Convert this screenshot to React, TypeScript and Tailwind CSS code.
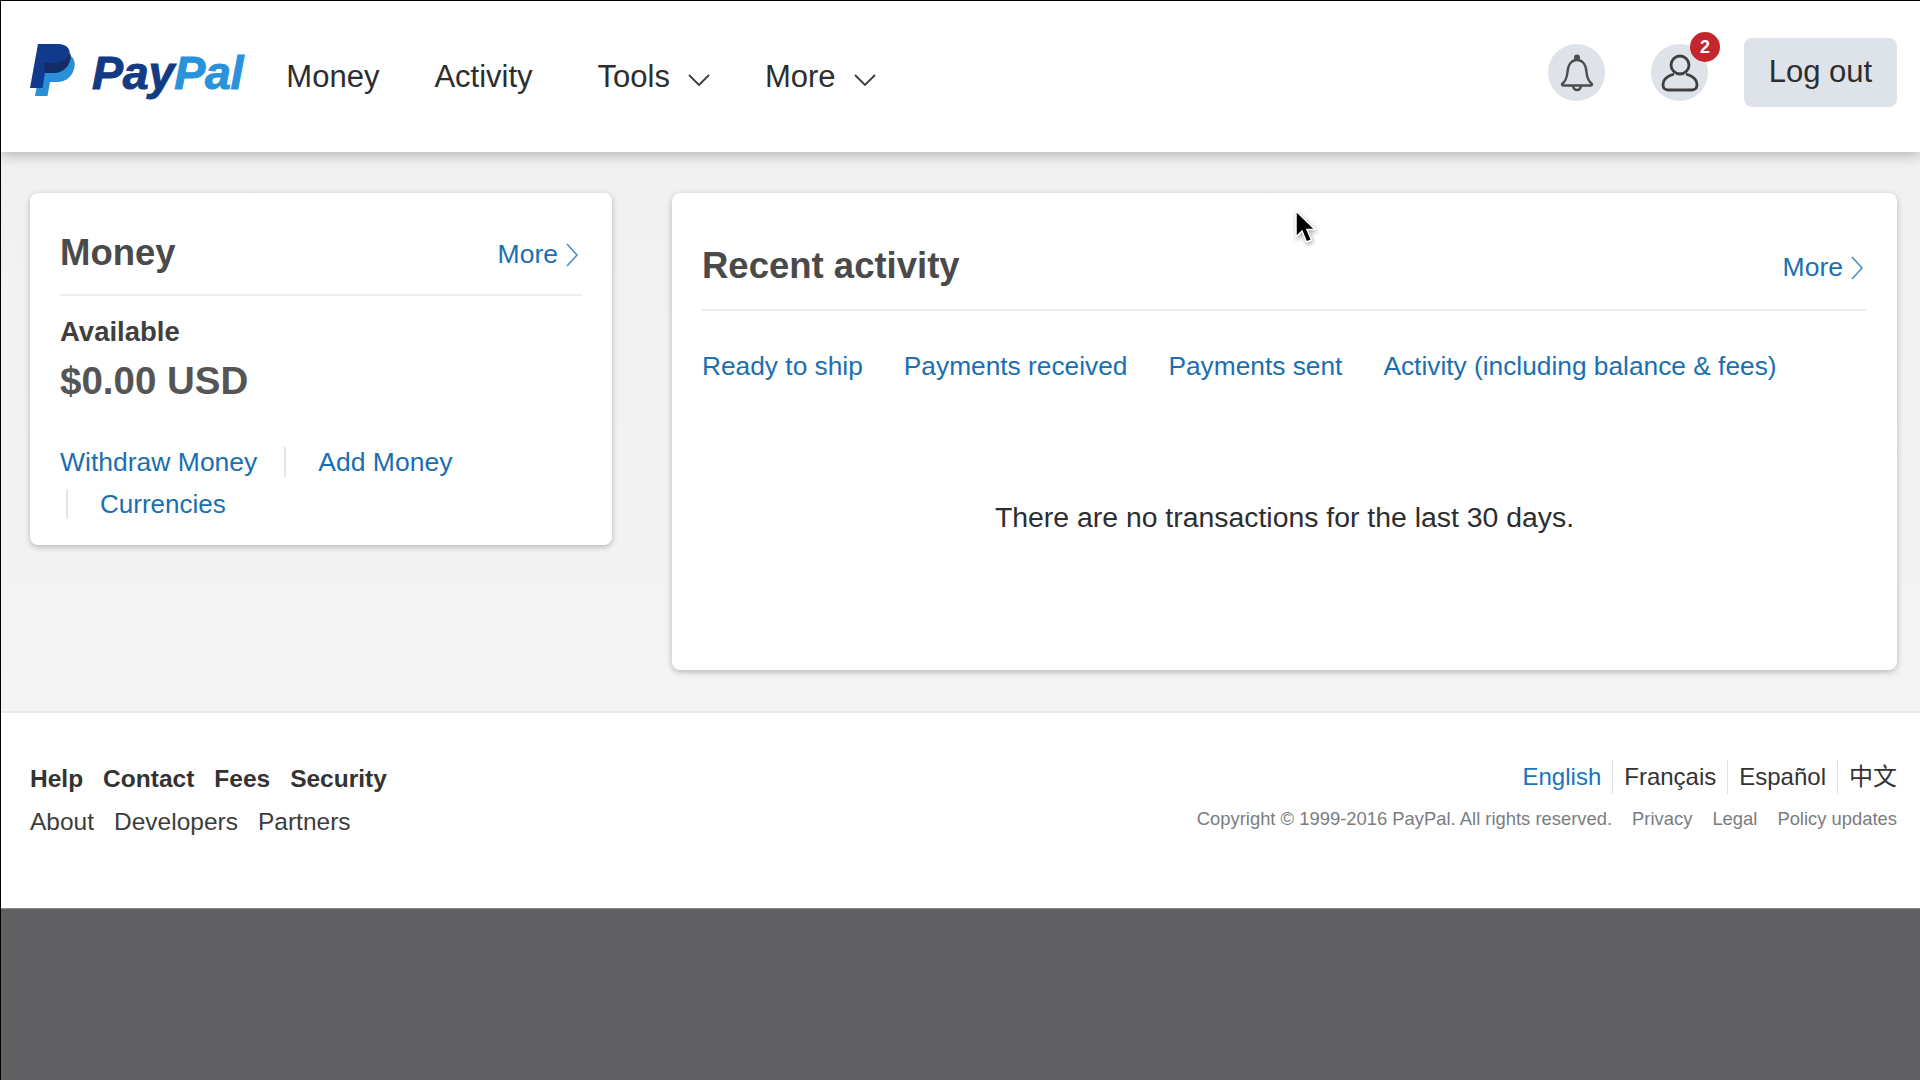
import React from 'react';

const font = { fontFamily: '"Liberation Sans", "Noto Sans CJK SC", sans-serif' };

const Chevron = () => (
  <svg width="24" height="14" viewBox="0 0 24 14" fill="none" stroke="#3c3c3c" strokeWidth="1.8" className="ml-[17px] mt-[6px]">
    <path d="M2 2l10 10L22 2" />
  </svg>
);

const ChevronRight = () => (
  <svg width="14" height="26" viewBox="0 0 14 26" fill="none" stroke="#4a8fc4" strokeWidth="1.6" className="ml-[7px]">
    <path d="M2 2l10 11L2 24" />
  </svg>
);

const MoreLink = () => (
  <a className="mt-[3px] flex items-center text-[26.500px] text-[#1a6fb0]">
    More
    <ChevronRight />
  </a>
);

const Logo = () => (
  <div className="flex items-center">
    <svg width="46" height="52" viewBox="0 0 46 52" className="-mt-[6px]">
      <path d="M13 9h18c9 0 15 5 13.500 14C43 32 36 38 27 38h-7l-2.500 14H5z" fill="#2790d8" />
      <path d="M8 0h20c9 0 13 5 11.500 13C38 23 31 29 22 29h-7l-2.500 15H0z" fill="#123a8c" />
      <path d="M14 19h9c9 0 16-5 17-10 1 2 1 3 .500 6-1.500 8-8 14-17 14h-8.500z" fill="#142d66" />
    </svg>
    <span className="ml-[16px] mt-[2px] text-[46.500px] leading-none font-bold italic tracking-[-0.2px] [-webkit-text-stroke:1px_currentColor]">
      <span className="text-[#133a85]">Pay</span>
      <span className="text-[#2a92da]">Pal</span>
    </span>
  </div>
);

const Bell = () => (
  <svg width="36" height="38" viewBox="0 0 36 38" fill="none" stroke="#4d4d4d" strokeWidth="2.400" strokeLinejoin="round">
    <circle cx="18" cy="3.500" r="1.800" fill="#4d4d4d" />
    <path d="M3 30c4-3 5-6 5.500-12C9 10 13 6 18 6s9 4 9.500 12c.5 6 1.500 9 5.500 12 0 1-.5 1.500-1.500 1.500h-27C3.500 31.500 3 31 3 30z" />
    <path d="M14 32c.5 3 2 4 4 4s3.500-1 4-4" />
  </svg>
);

const User = () => (
  <svg width="38" height="38" viewBox="0 0 38 38" fill="none" stroke="#3f3f3f" strokeWidth="2.800">
    <circle cx="19" cy="11" r="9" />
    <path d="M13 20C6 22 2 26 2 31c0 3 2 5 5 5h24c3 0 5-2 5-5 0-5-4-9-11-11" />
  </svg>
);

const Cursor = () => (
  <svg width="26" height="36" viewBox="0 0 26 36" className="absolute left-[1293px] top-[209px]" style={{ filter: 'drop-shadow(1px 2px 2px rgba(0,0,0,.35))' }}>
    <path d="M2 1v26l6-6 4.500 11 5-2-4.500-10.500H21z" fill="#000" stroke="#fff" strokeWidth="1.500" />
  </svg>
);

export default function App() {
  return (
    <div className="relative flex min-h-[1080px] flex-col border-t border-l border-black bg-[#616163]" style={font}>
      <header className="z-10 flex h-[151px] shrink-0 items-center bg-white pb-[8px] pl-[29px] pr-[23px] shadow-[0_2px_14px_rgba(0,0,0,0.3)]">
        <Logo />
        <nav className="ml-[43px] flex items-center pt-[9px] text-[31px] text-[#2c2e2f]">
          <a>Money</a>
          <a className="ml-[55px]">Activity</a>
          <a className="ml-[65px] flex items-center">Tools<Chevron /></a>
          <a className="ml-[54px] flex items-center">More<Chevron /></a>
        </nav>
        <div className="ml-auto flex items-center">
          <div className="flex h-[57px] w-[57px] items-center justify-center rounded-full bg-[#dee3e9]">
            <Bell />
          </div>
          <div className="relative ml-[46px] flex h-[57px] w-[57px] items-center justify-center rounded-full bg-[#dee3e9]">
            <User />
            <span className="absolute -right-[12px] -top-[12px] flex h-[30px] w-[30px] items-center justify-center rounded-full bg-[#c3272d] text-[18px] font-bold text-white">2</span>
          </div>
          <button className="ml-[36px] h-[69px] w-[153px] rounded-lg bg-[#dee3e9] text-[31px] text-[#2c2e2f]">Log out</button>
        </div>
      </header>

      <main className="flex h-[559px] shrink-0 items-start gap-[60px] bg-gradient-to-b from-[#f1f1f1] to-[#f4f4f4] pl-[29px] pr-[23px] pt-[41px]">
        <section className="h-[352px] w-[582px] shrink-0 rounded-lg bg-white px-[30px] shadow-[0_2px_6px_rgba(0,0,0,0.25)]">
          <div className="flex h-[103px] items-center justify-between border-b-2 border-[#eeeeee] pb-[6px] pr-[3px] pt-[26px]">
            <h2 className="text-[36.500px] font-bold text-[#4a4a4a]">Money</h2>
            <MoreLink />
          </div>
          <p className="mt-[20px] text-[27.500px] leading-[32px] font-bold text-[#3f3f3f]">Available</p>
          <p className="mt-[11px] text-[38.500px] leading-[44px] font-bold text-[#555555]">$0.00 USD</p>
          <div className="mt-[44px] flex flex-wrap text-[26.500px] leading-[30px] text-[#1a6fb0]">
            <a className="mr-[21px] mb-[12px]">Withdraw Money</a>
            <a className="mb-[12px] ml-[6px] mr-[21px] border-l-2 border-[#e6e6e6] pl-[32px]">Add Money</a>
            <a className="mb-[12px] ml-[6px] mr-[21px] border-l-2 border-[#e6e6e6] pl-[32px] text-[26px]">Currencies</a>
          </div>
        </section>

        <section className="h-[477px] flex-1 rounded-lg bg-white px-[30px] shadow-[0_2px_6px_rgba(0,0,0,0.25)]">
          <div className="flex h-[118px] items-center justify-between border-b-2 border-[#eeeeee] pr-[3px] pt-[36px] pb-[6px]">
            <h2 className="text-[36.500px] font-bold text-[#4a4a4a]">Recent activity</h2>
            <MoreLink />
          </div>
          <div className="mt-[39px] flex gap-[41px] text-[26.300px] leading-[32px] text-[#1a6fb0]">
            <a>Ready to ship</a>
            <a>Payments received</a>
            <a>Payments sent</a>
            <a>Activity (including balance &amp; fees)</a>
          </div>
          <p className="mt-[118px] text-center text-[28.400px] leading-[34px] text-[#2c2e2f]">There are no transactions for the last 30 days.</p>
        </section>
      </main>

      <footer className="flex h-[197px] shrink-0 items-start justify-between border-t-2 border-[#e9e9e9] bg-white pl-[29px] pr-[23px] pt-[51px]">
        <div>
          <div className="flex gap-[20px] text-[24.500px] leading-[30px] font-bold text-[#333333]">
            <a>Help</a>
            <a>Contact</a>
            <a>Fees</a>
            <a>Security</a>
          </div>
          <div className="mt-[13px] flex gap-[20px] text-[24.500px] leading-[30px] text-[#3c3c3c]">
            <a>About</a>
            <a>Developers</a>
            <a>Partners</a>
          </div>
        </div>
        <div className="-mt-[4px] flex flex-col items-end">
          <div className="flex items-center text-[24px] leading-[34px] text-[#333333]">
            <a className="pr-[11px] text-[#1a75bb]">English</a>
            <a className="border-l border-[#e2e2e2] px-[11px]">Français</a>
            <a className="border-l border-[#e2e2e2] px-[11px]">Español</a>
            <a className="border-l border-[#e2e2e2] pl-[11px]">中文</a>
          </div>
          <div className="mt-[13px] flex gap-[20px] text-[18.400px] leading-[24px] text-[#7a7d80]">
            <span>Copyright © 1999-2016 PayPal. All rights reserved.</span>
            <a>Privacy</a>
            <a>Legal</a>
            <a>Policy updates</a>
          </div>
        </div>
      </footer>

      <div className="h-[172px] border-t border-[#8a8a8a] bg-[#616163]" />
      <Cursor />
    </div>
  );
}
